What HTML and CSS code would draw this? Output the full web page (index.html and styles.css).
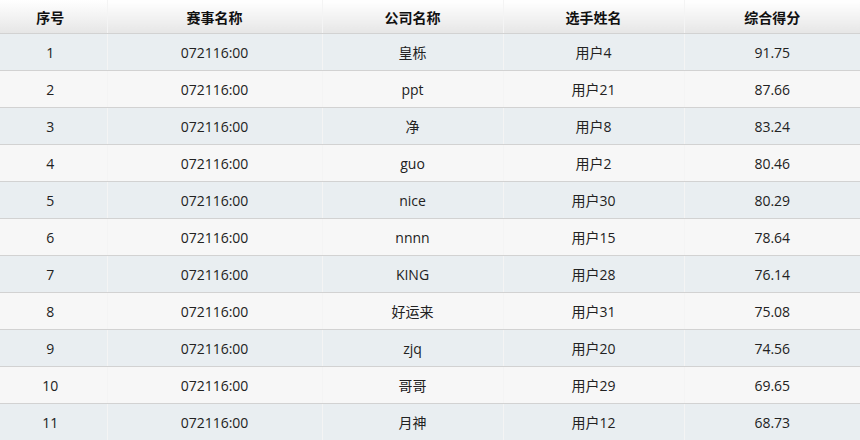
FILE: index.html
```html
<!DOCTYPE html>
<html lang="zh">
<head>
<meta charset="utf-8">
<title>排行</title>
<link rel="stylesheet" href="styles.css">
</head>
<body>
<table class="rank">
  <colgroup>
    <col class="c1"><col class="c2"><col class="c3"><col class="c4"><col class="c5">
  </colgroup>
  <thead>
    <tr><th>序号</th><th>赛事名称</th><th>公司名称</th><th>选手姓名</th><th>综合得分</th></tr>
  </thead>
  <tbody>
    <tr><td>1</td><td>072116:00</td><td>皇栎</td><td>用户4</td><td>91.75</td></tr>
    <tr><td>2</td><td>072116:00</td><td>ppt</td><td>用户21</td><td>87.66</td></tr>
    <tr><td>3</td><td>072116:00</td><td>净</td><td>用户8</td><td>83.24</td></tr>
    <tr><td>4</td><td>072116:00</td><td>guo</td><td>用户2</td><td>80.46</td></tr>
    <tr><td>5</td><td>072116:00</td><td>nice</td><td>用户30</td><td>80.29</td></tr>
    <tr><td>6</td><td>072116:00</td><td>nnnn</td><td>用户15</td><td>78.64</td></tr>
    <tr><td>7</td><td>072116:00</td><td>KING</td><td>用户28</td><td>76.14</td></tr>
    <tr><td>8</td><td>072116:00</td><td>好运来</td><td>用户31</td><td>75.08</td></tr>
    <tr><td>9</td><td>072116:00</td><td>zjq</td><td>用户20</td><td>74.56</td></tr>
    <tr><td>10</td><td>072116:00</td><td>哥哥</td><td>用户29</td><td>69.65</td></tr>
    <tr><td>11</td><td>072116:00</td><td>月神</td><td>用户12</td><td>68.73</td></tr>
  </tbody>
</table>
</body>
</html>
```
FILE: styles.css
```css
html, body {
  margin: 0;
  padding: 0;
  background: #ffffff;
}
.rank {
  width: 860px;
  border-collapse: collapse;
  table-layout: fixed;
  font-family: "Open Sans", "Noto Sans CJK SC", sans-serif;
  font-size: 14px;
  color: #222;
}
.c1 { width: 107px; }
.c2 { width: 215px; }
.c3 { width: 181px; }
.c4 { width: 181px; }
.c5 { width: 176px; }
.rank th, .rank td {
  padding: 0;
  text-align: center;
  border-right: 1px solid #f4f4f4;
  border-bottom: 1px solid #d2d2d2;
  white-space: nowrap;
}
.rank th:first-child, .rank td:first-child {
  padding-right: 6px;
}
.rank th:last-child, .rank td:last-child {
  border-right: none;
}
.rank th {
  height: 33px;
  font-family: "Noto Sans CJK SC", sans-serif;
  font-weight: bold;
  color: #111;
  background: linear-gradient(to bottom, #ffffff 0%, #f3f3f3 50%, #e6e6e6 100%);
}
.rank td {
  height: 36px;
}
.rank tbody tr:nth-child(odd) td {
  background: #e9eef1;
}
.rank tbody tr:nth-child(even) td {
  background: #f7f7f7;
}
```
